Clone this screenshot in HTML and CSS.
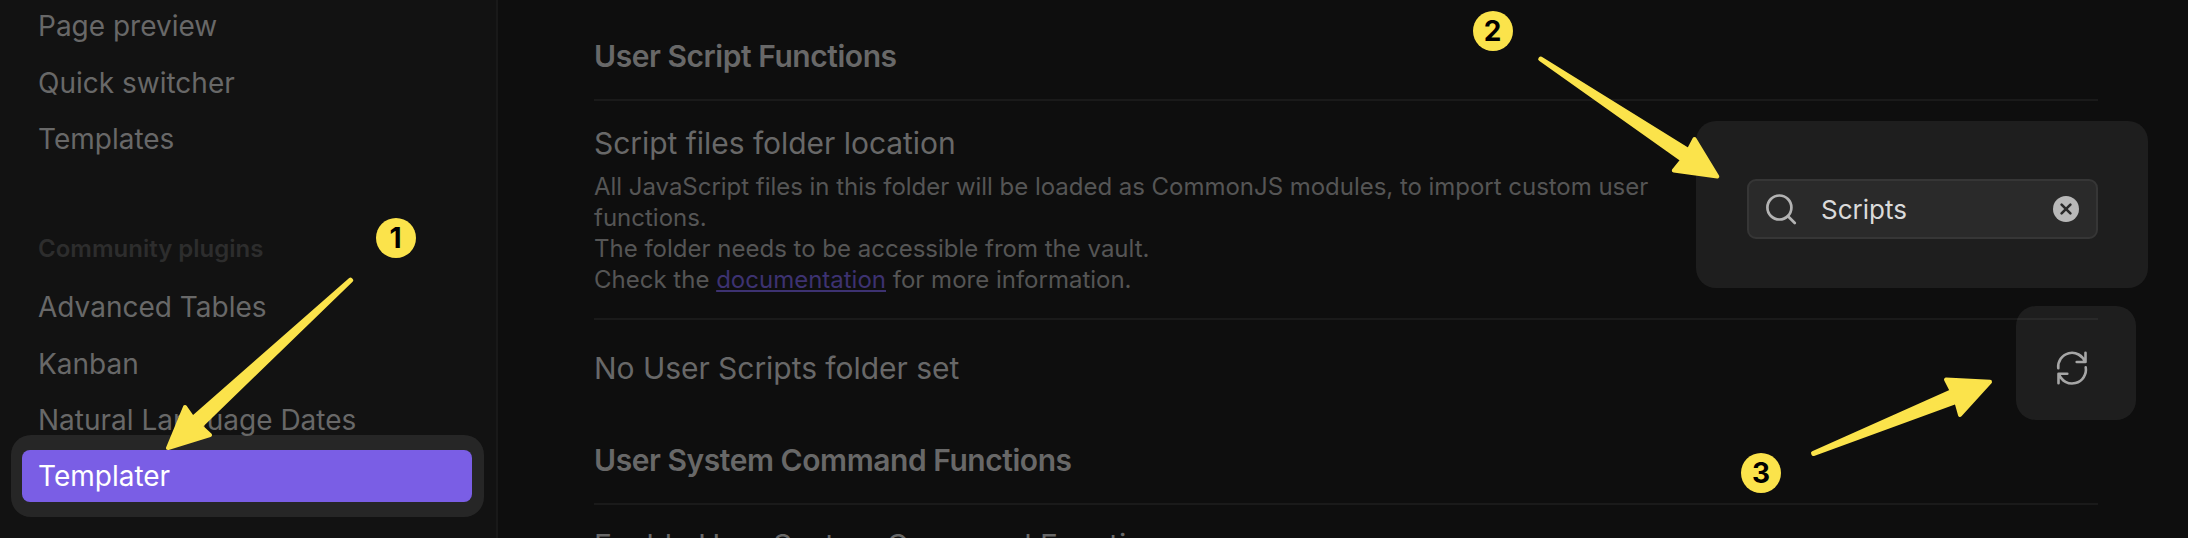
FILE: index.html
```
<!DOCTYPE html>
<html lang="en">
<head>
<meta charset="utf-8">
<title>Settings</title>
<link rel="stylesheet" href="styles.css">
</head>
<body>
<div class="settings">
  <nav class="sidebar">
    <a class="nav-item">Page preview</a>
    <a class="nav-item">Quick switcher</a>
    <a class="nav-item">Templates</a>
    <h2 class="nav-title">Community plugins</h2>
    <a class="nav-item">Advanced Tables</a>
    <a class="nav-item">Kanban</a>
    <a class="nav-item">Natural Language Dates</a>
    <div class="nav-spot"><a class="nav-item active">Templater</a></div>
  </nav>
  <main class="content">
    <h3 class="heading first">User Script Functions</h3>
    <section class="setting folder">
      <div class="info">
        <div class="name">Script files folder location</div>
        <div class="desc"><span class="desc-lead">All JavaScript files in this folder will be loaded as CommonJS modules, to import custom user</span><br>functions.<br>The folder needs to be accessible from the vault.<br>Check the <a class="link">documentation</a> for more information.</div>
      </div>
      <div class="search-spot">
        <div class="search">
          <svg class="search-icon" viewBox="0 0 34 34"><circle cx="13.400" cy="15.500" r="12"/><path d="M22 24.200 28.800 31"/></svg>
          <span class="value">Scripts</span>
          <svg class="clear" viewBox="0 0 26 26"><circle cx="13" cy="13" r="13"/><path d="M8.600 8.600l8.800 8.800M17.400 8.600l-8.800 8.800"/></svg>
        </div>
      </div>
    </section>
    <section class="setting reload">
      <div class="name">No User Scripts folder set</div>
      <div class="reload-spot">
        <svg class="refresh" viewBox="0 0 36 36"><path d="M4.300 18.300A13.800 13.800 0 0 1 31 12M31.500 2.800V12H22.700M31.700 17.300A13.800 13.800 0 0 1 5 24M4.500 33.200V23.800H13.300"/></svg>
      </div>
    </section>
    <h3 class="heading second">User System Command Functions</h3>
    <section class="setting last"><div class="name">Enable User System Command Functions</div></section>
  </main>
  <svg class="arrows" viewBox="0 0 2188 538">
    <path d="M350.500 279.500 192.700 417.900 185 407 168 448 210 435 200.500 426.200 351.200 280.300Z"/>
    <path d="M1540.700 58.500 1688.600 150.300 1694.500 139 1717.300 176.500 1673.800 170.500 1682.300 159.900 1540.200 59.200Z"/>
    <path d="M1813 453 1951.900 391 1946 379.500 1990 381.800 1960 415 1956.300 401.800 1813.400 454Z"/>
  </svg>
  <div class="badge one">1</div>
  <div class="badge two">2</div>
  <div class="badge three">3</div>
</div>
</body>
</html>
```
FILE: styles.css
```
* { box-sizing: border-box; }
body { margin: 0; background: #0e0e0e; font-family: Inter, "Liberation Sans", sans-serif; }
.settings { position: relative; display: flex; width: 2188px; height: 538px; overflow: hidden; color: #686868; }
.sidebar { width: 498px; flex: none; padding: 0 11px; background: #121212; border-right: 2px solid #191919; }
.nav-item { display: block; height: 52px; margin: 0 0 4.500px 11px; padding-left: 16px; line-height: 52px; font-size: 28px; white-space: nowrap; }
.nav-title { margin: 57.500px 0 6.500px 27px; font-size: 24px; font-weight: 600; line-height: 52px; color: #2d2d2d; }
.nav-spot { width: 473px; height: 82px; margin-top: -15.500px; padding: 15px 12px 15px 11px; border-radius: 20px; background: rgba(255,255,255,.085); }
.nav-item.active { margin: 0; color: #fff; background: #7a5ee5; border-radius: 8px; }
.content { width: 1504px; margin-left: 96px; flex: none; }
.heading { margin: 0; font-size: 30px; font-weight: 600; line-height: 40px; letter-spacing: -0.450px; }
.heading.first { height: 99px; padding-top: 36px; }
.setting { display: flex; justify-content: space-between; border-top: 2px solid #1a1a1a; }
.name { font-size: 30px; line-height: 40px; letter-spacing: -0.040px; white-space: nowrap; }
.folder { height: 219px; }
.info { padding-top: 22px; }
.desc { margin-top: 8px; font-size: 24px; line-height: 31px; color: #555; white-space: nowrap; }
.desc-lead { letter-spacing: -0.030px; }
.link { color: #3d3271; text-decoration: underline; }
.search-spot { width: 452px; height: 167px; flex: none; margin: 20px -50px 0 0; padding: 58px 50px 0 51px; background: #1e1e1e; border-radius: 20px; }
.search { display: flex; align-items: center; height: 60px; padding: 0 17px; border: 2px solid #363636; border-radius: 9px; background: #2a2a2a; color: #dadada; }
.search-icon { width: 34px; height: 34px; fill: none; stroke: #b3b3b3; stroke-width: 2.700; stroke-linecap: round; }
.value { flex: 1; margin-left: 21px; font-size: 26px; }
.clear { width: 26px; height: 26px; }
.clear circle { fill: #b8b8b8; }
.clear path { stroke: #2a2a2a; stroke-width: 2.600; stroke-linecap: round; }
.reload { height: 122px; }
.reload .name { padding-top: 28px; }
.reload-spot { display: flex; width: 120px; height: 114px; margin: -14px -38px 0 0; padding: 44px 0 0 38px; background: rgba(255,255,255,.067); border-radius: 20px; }
.refresh { width: 36px; height: 36px; fill: none; stroke: #a6a6a6; stroke-width: 2.600; stroke-linecap: round; stroke-linejoin: round; }
.heading.second { height: 63px; }
.last .name { padding-top: 20px; }
.arrows { position: absolute; inset: 0; fill: #fbe34b; stroke: #fbe34b; stroke-width: 4; stroke-linejoin: round; }
.badge { position: absolute; width: 40px; height: 40px; border-radius: 50%; background: #fbe34b; color: #000; font-size: 28px; font-weight: 700; line-height: 40px; text-align: center; }
.one { left: 375.500px; top: 218px; }
.two { left: 1472.500px; top: 11.300px; }
.three { left: 1741px; top: 453px; }
```
